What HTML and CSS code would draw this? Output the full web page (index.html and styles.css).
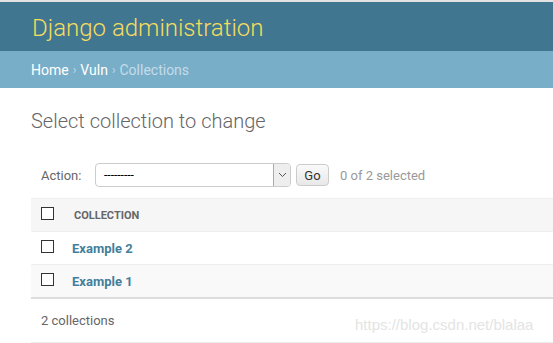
FILE: index.html
```html
<!DOCTYPE html>
<html lang="en">
<head>
  <meta charset="UTF-8" />
  <meta name="viewport" content="width=device-width, initial-scale=1.0" />
  <title>Select collection to change | Django site admin</title>
  <link rel="stylesheet" href="styles.css">
</head>
<body>
<div class="topline"></div>
<div id="header">
  <div class="branding">Django administration</div>
</div>
<div class="breadcrumbs">
  <a href="#">Home</a> <span class="sep">&rsaquo;</span> <a href="#">Vuln</a> <span class="sep">&rsaquo;</span> <span class="current">Collections</span>
</div>

<div id="content">
  <h1>Select collection to change</h1>

  <div class="actions">
    <label>Action:</label>
    <div class="select">
      <span class="value">---------</span>
      <span class="arrow">
        <svg width="9" height="6" viewBox="0 0 9 6"><path d="M1 1 L4.5 4.5 L8 1" fill="none" stroke="#555" stroke-width="1"/></svg>
      </span>
    </div>
    <button class="go">Go</button>
    <span class="counter">0 of 2 selected</span>
  </div>

  <table id="result_list">
    <thead>
      <tr>
        <th class="check"><input type="checkbox" /></th>
        <th class="name">Collection</th>
      </tr>
    </thead>
    <tbody>
      <tr class="row1">
        <td class="check"><input type="checkbox" /></td>
        <th class="field"><a href="#">Example 2</a></th>
      </tr>
      <tr class="row2">
        <td class="check"><input type="checkbox" /></td>
        <th class="field"><a href="#">Example 1</a></th>
      </tr>
    </tbody>
  </table>

  <p class="paginator">2 collections</p>
</div>

<div class="watermark">https://blog.csdn.net/blalaa</div>
</body>
</html>
```

FILE: styles.css
```css
body {
  margin: 0;
  font-family: Roboto, "Liberation Sans", Arial, sans-serif;
  font-size: 13px;
  color: #333;
  background: #fff;
  overflow: hidden;
}
a {
  text-decoration: none;
}
.topline {
  height: 2px;
  background: #e2e2e2;
}
#header {
  height: 49px;
  background: #417690;
  display: flex;
  align-items: center;
  padding: 0 32px;
}
.branding {
  color: #f5dd5d;
  font-size: 24px;
  font-weight: 300;
  margin-top: 2px;
}
.breadcrumbs {
  height: 37px;
  background: #79aec8;
  padding: 0 31px;
  display: flex;
  align-items: center;
  gap: 4px;
  font-size: 14px;
  color: #c4dce8;
}
.breadcrumbs a {
  color: #fff;
}
.breadcrumbs .sep {
  font-size: 12px;
}
#content {
  padding-left: 31px;
}
h1 {
  margin: 21px 0 0;
  font-size: 20px;
  line-height: 24px;
  font-weight: 300;
  color: #666;
}
.actions {
  margin-top: 30px;
  height: 24px;
  display: flex;
  align-items: center;
  padding-left: 10px;
  color: #666;
}
.actions label {
  width: 54px;
}
.select {
  width: 194px;
  height: 22px;
  border: 1px solid #ccc;
  border-radius: 4px;
  display: flex;
  align-items: center;
  overflow: hidden;
}
.select .value {
  flex: 1;
  padding-left: 8px;
  color: #000;
  font-size: 12px;
}
.select .arrow {
  width: 16px;
  height: 22px;
  background: #eee;
  border-left: 1px solid #aaa;
  display: flex;
  align-items: center;
  justify-content: center;
}
.go {
  margin-left: 5px;
  width: 33px;
  height: 22px;
  border: 1px solid #ccc;
  border-radius: 4px;
  background: linear-gradient(#fafafa, #e8e8e8);
  font-family: inherit;
  font-size: 13px;
  color: #333;
  padding: 0;
}
.counter {
  margin-left: 11px;
  color: #999;
}
table {
  margin-top: 11px;
  width: 100%;
  border-collapse: collapse;
}
thead th {
  background: #f6f6f6;
  border-top: 1px solid #eee;
  border-bottom: 1px solid #eee;
  height: 32px;
  padding: 0;
  text-align: left;
}
thead th.name {
  font-size: 11px;
  font-weight: 700;
  text-transform: uppercase;
  color: #666;
  padding-left: 2px;
}
td, tbody th {
  height: 32px;
  padding: 0;
  border-bottom: 1px solid #eee;
  text-align: left;
}
tbody tr.row2 {
  background: #f9f9f9;
}
tbody tr.row2 td, tbody tr.row2 th {
  border-bottom: 2px solid #ddd;
}
.check {
  width: 41px;
  padding-left: 10px;
  box-sizing: border-box;
}
input[type="checkbox"] {
  appearance: none;
  width: 13px;
  height: 13px;
  margin: -3px 0 0;
  border: 1px solid #333;
  background: #fff;
  display: block;
}
.field a {
  color: #447e9b;
  font-weight: 700;
  font-size: 13px;
}
.paginator {
  margin: 0;
  height: 43px;
  line-height: 43px;
  padding-left: 10px;
  color: #666;
  border-bottom: 1px solid #eee;
}
.watermark {
  position: absolute;
  left: 355px;
  top: 316px;
  font-family: "Liberation Sans", Arial, sans-serif;
  font-size: 15px;
  color: #e4e4e4;
}
```
